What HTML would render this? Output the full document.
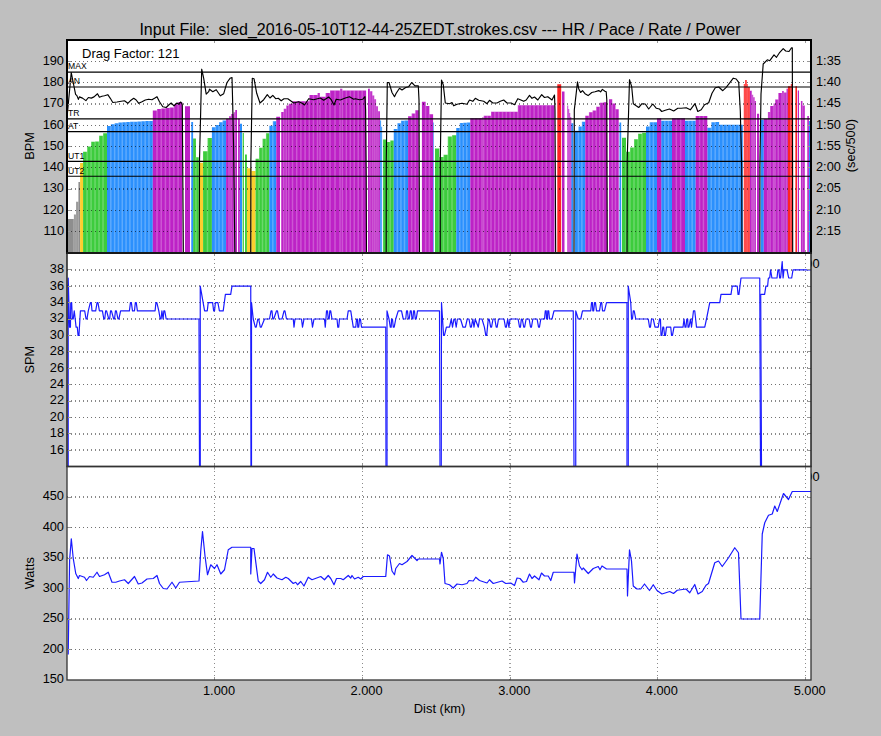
<!DOCTYPE html><html><head><meta charset="utf-8"><style>html,body{margin:0;padding:0;background:#bfbfbf;}svg{display:block;}text{font-family:"Liberation Sans",sans-serif;}</style></head><body><svg width="881" height="736" viewBox="0 0 881 736"><defs><clipPath id="c1"><rect x="67" y="40" width="744" height="213"/></clipPath><clipPath id="c2"><rect x="67" y="253" width="744" height="213.5"/></clipPath><clipPath id="c3"><rect x="67" y="466.5" width="744" height="213.5"/></clipPath><pattern id="st" x="0.6" y="0" width="3.9" height="20" patternUnits="userSpaceOnUse"><rect x="0" y="0" width="1" height="20" fill="#fff" fill-opacity="0.28"/></pattern></defs><rect x="0" y="0" width="881" height="736" fill="#bfbfbf"/><rect x="67" y="40" width="744" height="213" fill="#fff"/><rect x="67" y="253" width="744" height="213.5" fill="#fff"/><rect x="67" y="466.5" width="744" height="213.5" fill="#fff"/><g clip-path="url(#c1)"><path d="M68 253V218.9H73.9V253ZM73.9 253V214.5H76V253ZM76 253V201.75H78.25V253ZM78.25 253V182H80.1V253Z" fill="#8e8e8e"/><path d="M80.1 253V163.1H83.1V253ZM198.75 253V162.66H203.1V253ZM246.9 253V168.26H251.25V253ZM251.25 253V171H255.6V253Z" fill="#fccf2e"/><path d="M83.1 253V151.66H87.08V253ZM87.08 253V146.44H91.07V253ZM91.07 253V141.64H95.05V253ZM95.05 253V141.43H99.03V253ZM99.03 253V135.65H103.02V253ZM103.02 253V133.3H107V253ZM193.1 253V138.55H195.93V253ZM195.93 253V157.14H198.75V253ZM203.1 253V151.3H207.5V253ZM207.5 253V138.04H211.9V253ZM242.6 253V133.1H243.9V253ZM245 253V154.6H246.9V253ZM255.6 253V158.71H259.05V253ZM259.05 253V147.8H262.5V253ZM262.5 253V138.81H265.95V253ZM265.95 253V133.18H269.4V253ZM383.1 253V139.56H386.65V253ZM386.65 253V141.9H390.2V253ZM390.2 253V140.52H393.75V253ZM435 253V148.56H439.25V253ZM439.25 253V156.9H443.5V253ZM443.5 253V154.75H447.75V253ZM447.75 253V136.62H452V253ZM452 253V135.2H456.25V253ZM622 253V137.72H626V253ZM626 253V151.76H630V253ZM630 253V147.4H634V253ZM634 253V139.31H638V253ZM638 253V133.69H642V253ZM642 253V132.76H646V253Z" fill="#3dcc3d"/><path d="M107 253V126.05H110.82V253ZM110.82 253V124.28H114.63V253ZM114.63 253V123.14H118.45V253ZM118.45 253V122.42H122.27V253ZM122.27 253V122.23H126.08V253ZM126.08 253V122.04H129.9V253ZM129.9 253V121.85H133.72V253ZM133.72 253V121.66H137.53V253ZM137.53 253V121.47H141.35V253ZM141.35 253V121.28H145.17V253ZM145.17 253V121.09H148.98V253ZM148.98 253V120.9H152.8V253ZM191.25 253V122H193.1V253ZM211.9 253V127.22H215.45V253ZM215.45 253V125.08H219V253ZM219 253V122.18H222.55V253ZM222.55 253V120.57H226.1V253ZM239.8 253V123.75H242V253ZM269.4 253V125.78H272.82V253ZM272.82 253V121.32H276.25V253ZM379.9 253V120.6H381.1V253ZM381.1 253V126.8H382.1V253ZM393.75 253V128.91H397.34V253ZM397.34 253V123.26H400.92V253ZM400.93 253V120.84H404.51V253ZM404.51 253V120.45H408.1V253ZM433.1 253V122.5H433.75V253ZM456.25 253V128.12H459.76V253ZM459.76 253V123.01H463.27V253ZM463.27 253V122.81H466.79V253ZM466.79 253V122.6H470.3V253ZM571.2 253V123.3H573.3V253ZM575 253V130.8H578.43V253ZM578.43 253V126.52H581.87V253ZM581.87 253V121.72H585.3V253ZM619.5 253V122.5H621.2V253ZM646 253V126.42H649.67V253ZM649.67 253V122.3H653.33V253ZM653.33 253V122.3H657V253ZM661.2 253V120.7H672V253ZM685 253V120.7H695.7V253ZM707.3 253V127.85H711.24V253ZM711.24 253V122.3H715.19V253ZM715.19 253V122.11H719.13V253ZM719.13 253V124.8H723.08V253ZM723.08 253V124.8H727.02V253ZM727.02 253V124.8H730.97V253ZM730.97 253V124.8H734.91V253ZM734.91 253V124.8H738.86V253ZM738.86 253V124.8H742.8V253ZM760.7 253V119.75H763.8V253ZM808.9 253V121H810.5V253Z" fill="#2b90fd"/><path d="M152.8 253V110.45H157.01V253ZM157.01 253V108.96H161.23V253ZM161.23 253V108.48H165.44V253ZM165.44 253V108H169.66V253ZM169.66 253V107.53H173.87V253ZM173.87 253V104.16H178.09V253ZM178.09 253V102.1H182.3V253ZM185 253V106.14H190V253ZM226.1 253V118.75H229V253ZM229 253V116.25H231.1V253ZM231.1 253V114H233.6V253ZM233.6 253V112.2H235.1V253ZM235.1 253V110H237V253ZM238.1 253V118.75H239.8V253ZM276.25 253V116.77H280V253ZM281.25 253V112H283.7V253ZM283.7 253V108.7H286.2V253ZM286.2 253V105.6H288.7V253ZM288.7 253V103.7H292.5V253ZM292.5 253V101.2H309.3V253ZM309.3 253V95H317.5V253ZM317.5 253V93.1H320V253ZM320 253V96.8H325.6V253ZM325.6 253V93.1H330V253ZM330 253V90.6H340V253ZM340 253V88.7H342.4V253ZM342.4 253V90.6H366.1V253ZM368 253V88.7H370V253ZM370 253V91.2H372.4V253ZM372.4 253V95.6H374.3V253ZM374.3 253V99.3H376.1V253ZM376.1 253V106.2H378V253ZM378 253V111.2H379.9V253ZM408.1 253V116.17H411.65V253ZM411.65 253V113.42H415.2V253ZM415.2 253V110.18H418.75V253ZM421.9 253V101.85H425.63V253ZM425.63 253V106.01H429.37V253ZM429.37 253V114.2H433.1V253ZM470.3 253V118.3H482V253ZM482 253V117.5H483.7V253ZM483.7 253V115.8H491V253ZM491 253V111.7H517.8V253ZM517.8 253V105.3H554.5V253ZM562 253V91.5H564.5V253ZM567.25 253V105.6H568.25V253ZM568.25 253V109H569.25V253ZM569.25 253V113H570.25V253ZM570.25 253V117H571.25V253ZM585.3 253V115.69H588.92V253ZM588.92 253V112.29H592.53V253ZM592.53 253V110.48H596.15V253ZM596.15 253V106.84H599.77V253ZM599.77 253V102.67H603.38V253ZM603.38 253V102.14H607V253ZM609 253V99.2H612.23V253ZM612.23 253V103.55H615.47V253ZM615.47 253V109.27H618.7V253ZM657 253V118.2H661.2V253ZM672 253V118.2H685V253ZM695.7 253V116H707.3V253ZM749.75 253V90.7H751.9V253ZM751.9 253V94.75H753.2V253ZM753.2 253V97.25H754.75V253ZM754.75 253V101H756V253ZM757 253V113.8H759.1V253ZM763.8 253V119.1H767.9V253ZM767.9 253V112H770.1V253ZM770.1 253V106H773.5V253ZM773.5 253V103.5H775.1V253ZM775.1 253V99.4H778.25V253ZM778.25 253V92.9H782V253ZM782 253V91H783.9V253ZM783.9 253V92.6H786.4V253ZM786.4 253V88.8H787.9V253ZM797.75 253V90.4H799V253ZM800.9 253V101H802.6V253ZM802.6 253V105.4H804.8V253ZM807.3 253V116H808.9V253Z" fill="#bd22c6"/><path d="M557.3 253V84.2H561.2V253ZM743.8 253V84.1H745V253ZM745 253V80.1H746.9V253ZM746.9 253V84.1H747.9V253ZM747.9 253V86.9H749.75V253ZM787.9 253V86.3H790.75V253ZM790.75 253V84.1H792.6V253ZM795.4 253V86.3H797V253Z" fill="#ff2424"/><path d="M73.15 253V214.5H74.65V253ZM75.25 253V201.75H76.75V253ZM77.5 253V182H79V253ZM86.33 253V146.44H87.83V253ZM90.32 253V141.64H91.82V253ZM94.3 253V141.43H95.8V253ZM98.28 253V135.65H99.78V253ZM102.27 253V133.3H103.77V253ZM110.07 253V124.28H111.57V253ZM113.88 253V123.14H115.38V253ZM117.7 253V122.42H119.2V253ZM121.52 253V122.23H123.02V253ZM125.33 253V122.04H126.83V253ZM129.15 253V121.85H130.65V253ZM132.97 253V121.66H134.47V253ZM136.78 253V121.47H138.28V253ZM140.6 253V121.28H142.1V253ZM144.42 253V121.09H145.92V253ZM148.23 253V120.9H149.73V253ZM156.26 253V108.96H157.76V253ZM160.48 253V108.48H161.98V253ZM164.69 253V108H166.19V253ZM168.91 253V107.53H170.41V253ZM173.12 253V104.16H174.62V253ZM177.34 253V102.1H178.84V253ZM195.18 253V157.14H196.68V253ZM206.75 253V138.04H208.25V253ZM214.7 253V125.08H216.2V253ZM218.25 253V122.18H219.75V253ZM221.8 253V120.57H223.3V253ZM228.25 253V116.25H229.75V253ZM230.35 253V114H231.85V253ZM232.85 253V112.2H234.35V253ZM234.35 253V110H235.85V253ZM250.5 253V171H252V253ZM258.3 253V147.8H259.8V253ZM261.75 253V138.81H263.25V253ZM265.2 253V133.18H266.7V253ZM272.07 253V121.32H273.57V253ZM282.95 253V108.7H284.45V253ZM285.45 253V105.6H286.95V253ZM287.95 253V103.7H289.45V253ZM291.75 253V101.2H293.25V253ZM295.95 253V101.2H297.45V253ZM300.15 253V101.2H301.65V253ZM304.35 253V101.2H305.85V253ZM308.55 253V95H310.05V253ZM312.65 253V95H314.15V253ZM316.75 253V93.1H318.25V253ZM319.25 253V93.1H320.75V253ZM324.85 253V93.1H326.35V253ZM329.25 253V90.6H330.75V253ZM334.25 253V90.6H335.75V253ZM339.25 253V88.7H340.75V253ZM341.65 253V88.7H343.15V253ZM345.6 253V90.6H347.1V253ZM349.55 253V90.6H351.05V253ZM353.5 253V90.6H355V253ZM357.45 253V90.6H358.95V253ZM361.4 253V90.6H362.9V253ZM369.25 253V88.7H370.75V253ZM371.65 253V91.2H373.15V253ZM373.55 253V95.6H375.05V253ZM375.35 253V99.3H376.85V253ZM377.25 253V106.2H378.75V253ZM380.35 253V120.6H381.85V253ZM385.9 253V141.9H387.4V253ZM389.45 253V140.52H390.95V253ZM396.59 253V123.26H398.09V253ZM400.18 253V120.84H401.68V253ZM403.76 253V120.45H405.26V253ZM410.9 253V113.42H412.4V253ZM414.45 253V110.18H415.95V253ZM424.88 253V106.01H426.38V253ZM428.62 253V114.2H430.12V253ZM438.5 253V156.9H440V253ZM442.75 253V154.75H444.25V253ZM447 253V136.62H448.5V253ZM451.25 253V135.2H452.75V253ZM459.01 253V123.01H460.51V253ZM462.52 253V122.81H464.02V253ZM466.04 253V122.6H467.54V253ZM473.45 253V118.3H474.95V253ZM477.35 253V118.3H478.85V253ZM481.25 253V117.5H482.75V253ZM482.95 253V115.8H484.45V253ZM486.6 253V115.8H488.1V253ZM490.25 253V111.7H491.75V253ZM494.08 253V111.7H495.58V253ZM497.91 253V111.7H499.41V253ZM501.74 253V111.7H503.24V253ZM505.56 253V111.7H507.06V253ZM509.39 253V111.7H510.89V253ZM513.22 253V111.7H514.72V253ZM517.05 253V105.3H518.55V253ZM521.13 253V105.3H522.63V253ZM525.21 253V105.3H526.71V253ZM529.28 253V105.3H530.78V253ZM533.36 253V105.3H534.86V253ZM537.44 253V105.3H538.94V253ZM541.52 253V105.3H543.02V253ZM545.59 253V105.3H547.09V253ZM549.67 253V105.3H551.17V253ZM567.5 253V105.6H569V253ZM568.5 253V109H570V253ZM569.5 253V113H571V253ZM577.68 253V126.52H579.18V253ZM581.12 253V121.72H582.62V253ZM588.17 253V112.29H589.67V253ZM591.78 253V110.48H593.28V253ZM595.4 253V106.84H596.9V253ZM599.02 253V102.67H600.52V253ZM602.63 253V102.14H604.13V253ZM611.48 253V103.55H612.98V253ZM614.72 253V109.27H616.22V253ZM625.25 253V151.76H626.75V253ZM629.25 253V147.4H630.75V253ZM633.25 253V139.31H634.75V253ZM637.25 253V133.69H638.75V253ZM641.25 253V132.76H642.75V253ZM648.92 253V122.3H650.42V253ZM652.58 253V122.3H654.08V253ZM664.05 253V120.7H665.55V253ZM667.65 253V120.7H669.15V253ZM675.58 253V118.2H677.08V253ZM679.92 253V118.2H681.42V253ZM687.82 253V120.7H689.32V253ZM691.38 253V120.7H692.88V253ZM698.82 253V116H700.32V253ZM702.68 253V116H704.18V253ZM710.49 253V122.3H711.99V253ZM714.44 253V122.11H715.94V253ZM718.38 253V124.8H719.88V253ZM722.33 253V124.8H723.83V253ZM726.27 253V124.8H727.77V253ZM730.22 253V124.8H731.72V253ZM734.16 253V124.8H735.66V253ZM738.11 253V124.8H739.61V253ZM744.25 253V80.1H745.75V253ZM746.15 253V80.1H747.65V253ZM747.15 253V84.1H748.65V253ZM751.15 253V90.7H752.65V253ZM752.45 253V94.75H753.95V253ZM754 253V97.25H755.5V253ZM767.15 253V112H768.65V253ZM769.35 253V106H770.85V253ZM772.75 253V103.5H774.25V253ZM774.35 253V99.4H775.85V253ZM777.5 253V92.9H779V253ZM781.25 253V91H782.75V253ZM783.15 253V91H784.65V253ZM785.65 253V88.8H787.15V253ZM790 253V84.1H791.5V253ZM801.85 253V101H803.35V253Z" fill="#fff" fill-opacity="0.24"/><line x1="67" y1="231.5" x2="811" y2="231.5" style="stroke:#000;stroke-opacity:0.56" stroke-width="1" stroke-dasharray="1 3"/><line x1="67" y1="210.5" x2="811" y2="210.5" style="stroke:#000;stroke-opacity:0.56" stroke-width="1" stroke-dasharray="1 3"/><line x1="67" y1="189" x2="811" y2="189" style="stroke:#000;stroke-opacity:0.93" stroke-width="1" stroke-dasharray="1 3"/><line x1="67" y1="167.5" x2="811" y2="167.5" style="stroke:#000;stroke-opacity:0.56" stroke-width="1" stroke-dasharray="1 3"/><line x1="67" y1="146.5" x2="811" y2="146.5" style="stroke:#000;stroke-opacity:0.56" stroke-width="1" stroke-dasharray="1 3"/><line x1="67" y1="125.5" x2="811" y2="125.5" style="stroke:#000;stroke-opacity:0.56" stroke-width="1" stroke-dasharray="1 3"/><line x1="67" y1="104" x2="811" y2="104" style="stroke:#000;stroke-opacity:0.93" stroke-width="1" stroke-dasharray="1 3"/><line x1="67" y1="82.5" x2="811" y2="82.5" style="stroke:#000;stroke-opacity:0.56" stroke-width="1" stroke-dasharray="1 3"/><line x1="67" y1="61.5" x2="811" y2="61.5" style="stroke:#000;stroke-opacity:0.56" stroke-width="1" stroke-dasharray="1 3"/><line x1="67" y1="72.12" x2="811" y2="72.12" stroke="#000" stroke-width="1.15"/><line x1="67" y1="87" x2="811" y2="87" stroke="#000" stroke-width="1.15"/><line x1="67" y1="118.88" x2="811" y2="118.88" stroke="#000" stroke-width="1.15"/><line x1="67" y1="131.62" x2="811" y2="131.62" stroke="#000" stroke-width="1.15"/><line x1="67" y1="161.38" x2="811" y2="161.38" stroke="#000" stroke-width="1.15"/><line x1="67" y1="176.25" x2="811" y2="176.25" stroke="#000" stroke-width="1.15"/><text x="68" y="69.42" font-size="8.6" fill="#000">MAX</text><text x="68" y="84.3" font-size="8.6" fill="#000">AN</text><text x="68" y="116.17" font-size="8.6" fill="#000">TR</text><text x="68" y="128.93" font-size="8.6" fill="#000">AT</text><text x="68" y="158.68" font-size="8.6" fill="#000">UT1</text><text x="68" y="173.55" font-size="8.6" fill="#000">UT2</text><polyline points="66.5,123 71.25,72.5 73.5,84 75.6,94.4 76.9,95.6 78.4,99.4 79.4,96.9 82.5,98.1 85.9,100.6 88.4,97.5 91.25,98.1 94,96.9 97.5,93.75 99.4,97.2 101.9,96.25 104.5,95.8 107.8,94.7 110.3,98.3 112.8,102.5 117,102 121.2,101.3 124.5,100.8 127.8,103.3 130.3,100.8 133.7,98.3 136.2,100 138.7,103.3 142,101.7 145.3,100 148.7,99.2 152,99.7 154.5,98.3 157,96.7 159.5,101.7 162.8,106.7 166.2,107.5 168.7,105 171.2,103 174,105.8 177,103 178.7,104.2 180.7,102 181.7,103.3 182.3,105 183.4,262" fill="none" stroke="#000" stroke-width="1.15" stroke-linejoin="round"/><polyline points="199.3,262 199.5,160 201.7,69.2 203.7,78.3 206.2,94.2 208.7,91.7 209.5,89.2 212.8,91.7 216.2,89.7 220.3,95.8 223.7,93.7 227,82.5 230,78.3 232,77.5 232.6,100 233.6,146 234.5,222 235,262" fill="none" stroke="#000" stroke-width="1.15" stroke-linejoin="round"/><polyline points="250.75,262 250.9,160 252.3,78.3 254,78.7 256.7,93.3 260,103 263.7,99.7 267.3,94.7 270,98 272.8,95.3 275.7,98.7 278.3,98.3 281.2,100.8 284,98.7 287.8,98.7 293.7,103 298.7,101.7 301.7,103 304.5,105 308.7,98.7 313.7,99.7 320.3,98 323.7,100.3 328.7,97 331.2,99.7 334,105 336.2,99.2 340.3,100 345.3,98 349.5,96.7 353.7,99.2 355.3,98.7 359.5,99.7 362.8,99.2 365,96.7 365.6,110 366.2,173 366.5,262" fill="none" stroke="#000" stroke-width="1.15" stroke-linejoin="round"/><polyline points="386.2,262 386.3,160 387.3,82.5 389,82.5 392,92.5 394.5,96.7 396.2,93.3 399.5,88.3 402,90 405.7,87.5 408.7,86.7 411.7,82.5 415,85.8 418.3,85.8 419,100 419.5,262" fill="none" stroke="#000" stroke-width="1.15" stroke-linejoin="round"/><polyline points="440.2,262 440.3,160 441.5,80 443.3,85 445.3,103 449.5,103.7 452,102.5 453.7,105.8 457,104.2 462,103.3 467,104.2 469.5,100 472.8,101.3 475.3,98.3 478.7,100.3 483.7,101.3 487,103.7 489.5,100.3 492.8,103 497,103 500.3,101.3 503.7,100 507,103 511.2,103 514.5,104.7 517.8,98.7 520.3,99.7 523.7,101.3 526.2,100 529.5,95.3 532,98.3 534.5,97 537.8,100 541.7,94.7 544.5,97.5 547.8,96.7 552,100 554.5,95 555,110 555.7,262" fill="none" stroke="#000" stroke-width="1.15" stroke-linejoin="round"/><polyline points="574,262 574.3,110 577.5,81.9 578.7,88.7 580.6,92.5 582.5,90.6 585,93.7 588.1,95.6 591.8,92.5 595,91.8 598.7,90.6 600.6,91.8 602.4,89.4 604.9,91.2 606.2,91.8 606.8,100 607.3,262" fill="none" stroke="#000" stroke-width="1.15" stroke-linejoin="round"/><polyline points="627,262 627.2,160 629.5,79.7 631.7,86.7 633.3,103.7 636.2,105.8 638.7,107.5 642,103.7 645.3,104 648.7,109 652.8,104 656.2,108.2 659.5,109 661.7,111.5 665.3,110.3 669.5,109 673.7,111 677.8,108.2 681.2,108.2 686.2,107.7 690.3,109.8 695,103.7 697.8,111.5 701.2,109.8 704.5,104.8 708.7,102.7 712,93.2 715.3,87.7 718.7,87 722.8,90.7 726.2,87.3 729.5,83.2 733.3,78.2 736.2,79 738.7,82.3 740.3,110.7 741.7,166.7 742,262" fill="none" stroke="#000" stroke-width="1.15" stroke-linejoin="round"/><polyline points="759.8,262 759.9,166.7 761,94 763.2,64 767.3,59.8 769.8,60.7 774,54.8 776.5,57.3 779.8,52.3 783.2,48.7 785.7,51 789,51.5 791.5,47.7 792.3,47.7 792.5,120 792.7,262" fill="none" stroke="#000" stroke-width="1.15" stroke-linejoin="round"/></g><text x="82" y="57.5" font-size="13" fill="#000">Drag Factor: 121</text><g clip-path="url(#c2)"><line x1="67" y1="450" x2="811" y2="450" style="stroke:#000;stroke-opacity:0.93" stroke-width="1" stroke-dasharray="1 3"/><line x1="67" y1="434" x2="811" y2="434" style="stroke:#000;stroke-opacity:0.93" stroke-width="1" stroke-dasharray="1 3"/><line x1="67" y1="417.5" x2="811" y2="417.5" style="stroke:#000;stroke-opacity:0.56" stroke-width="1" stroke-dasharray="1 3"/><line x1="67" y1="401" x2="811" y2="401" style="stroke:#000;stroke-opacity:0.93" stroke-width="1" stroke-dasharray="1 3"/><line x1="67" y1="384.5" x2="811" y2="384.5" style="stroke:#000;stroke-opacity:0.56" stroke-width="1" stroke-dasharray="1 3"/><line x1="67" y1="368" x2="811" y2="368" style="stroke:#000;stroke-opacity:0.93" stroke-width="1" stroke-dasharray="1 3"/><line x1="67" y1="352" x2="811" y2="352" style="stroke:#000;stroke-opacity:0.93" stroke-width="1" stroke-dasharray="1 3"/><line x1="67" y1="335.5" x2="811" y2="335.5" style="stroke:#000;stroke-opacity:0.56" stroke-width="1" stroke-dasharray="1 3"/><line x1="67" y1="319" x2="811" y2="319" style="stroke:#000;stroke-opacity:0.93" stroke-width="1" stroke-dasharray="1 3"/><line x1="67" y1="302.5" x2="811" y2="302.5" style="stroke:#000;stroke-opacity:0.56" stroke-width="1" stroke-dasharray="1 3"/><line x1="67" y1="286" x2="811" y2="286" style="stroke:#000;stroke-opacity:0.93" stroke-width="1" stroke-dasharray="1 3"/><line x1="67" y1="270" x2="811" y2="270" style="stroke:#000;stroke-opacity:0.93" stroke-width="1" stroke-dasharray="1 3"/><line x1="214.5" y1="255" x2="214.5" y2="466.5" style="stroke:#000;stroke-opacity:0.46" stroke-width="1" stroke-dasharray="1 3"/><line x1="362.5" y1="255" x2="362.5" y2="466.5" style="stroke:#000;stroke-opacity:0.46" stroke-width="1" stroke-dasharray="1 3"/><line x1="510" y1="255" x2="510" y2="466.5" style="stroke:#000;stroke-opacity:0.75" stroke-width="1" stroke-dasharray="1 3"/><line x1="657.5" y1="255" x2="657.5" y2="466.5" style="stroke:#000;stroke-opacity:0.46" stroke-width="1" stroke-dasharray="1 3"/><line x1="805.5" y1="255" x2="805.5" y2="466.5" style="stroke:#000;stroke-opacity:0.46" stroke-width="1" stroke-dasharray="1 3"/><polyline points="68.2,466.6 68.2,278 69.55,327.2 70.45,327.2 70.75,302.6 71.65,302.6 72.35,319 73.25,319 74.25,310.8 75.2,319 76.1,327.2 77.3,327.2 78.05,335.4 78.95,335.4 80.4,310.8 84.7,310.8 86.05,319 86.95,319 88.3,310.8 90.35,302.6 91.25,302.6 92,310.8 95.7,310.8 97.05,302.6 97.95,302.6 99.4,310.8 102.4,310.8 103.85,319 104.75,319 105.65,310.8 106.55,310.8 108.75,319 109.65,319 110.55,310.8 111.45,310.8 113.65,319 114.55,319 115.45,310.8 116.35,310.8 117.95,319 118.85,319 120.6,310.8 129.4,310.8 130.45,302.6 131.35,302.6 132.5,310.8 134.5,310.8 135.35,302.6 136.25,302.6 137.4,310.8 155.1,310.8 155.95,302.6 156.85,302.6 158.8,310.8 160.2,319 161.1,319 161.9,310.8 163.1,319 163.85,310.8 164.75,310.8 166.2,319 199,319 199.5,466.6" fill="none" stroke="#1a1aff" stroke-width="1.2" stroke-linejoin="round"/><polyline points="200.25,466.6 200.25,286.2 204.6,310.8 207.3,310.8 208.2,302.6 212.6,302.6 213.65,310.8 214.55,310.8 215.4,302.6 217.9,302.6 219.4,310.8 223.2,310.8 225.4,294.4 230.7,294.4 232,286.2 250.75,286.2 251,466.6" fill="none" stroke="#1a1aff" stroke-width="1.2" stroke-linejoin="round"/><polyline points="251.5,466.6 251.5,302.6 253.25,319 255.3,327.2 256.2,327.2 257.8,319 258.7,319 260.3,327.2 261.2,327.2 264.5,319 269.5,319 271.05,310.8 271.95,310.8 272.8,319 273.7,319 276.55,310.8 277.45,310.8 279,319 282,319 284.05,310.8 284.95,310.8 286.5,319 293.25,319 294,327.2 295,319 301.5,319 302.5,327.2 304,319 311.5,319 312.5,327.2 314,319 324.5,319 325.25,327.2 326.55,310.8 327.45,310.8 328.3,319 329.2,319 329.8,310.8 330.7,310.8 332,319 337,319 337.8,327.2 338.7,327.2 339.5,319 347,319 348.25,310.8 350.75,310.8 353.25,327.2 355.75,327.2 356.55,319 357.45,319 357.8,327.2 358.7,327.2 359.55,319 360.45,319 361.5,327.2 385.75,327.2 386,466.6" fill="none" stroke="#1a1aff" stroke-width="1.2" stroke-linejoin="round"/><polyline points="387,466.6 387,310.8 389,319 390.3,327.2 391.2,327.2 391.55,319 392.45,319 393.3,327.2 394.2,327.2 395.75,319 398.25,310.8 401.5,310.8 403.25,319 405.75,319 406.55,310.8 407.45,310.8 408.3,319 409.2,319 410.3,310.8 411.2,310.8 412.05,319 412.95,319 413.55,310.8 414.45,310.8 415.3,319 416.2,319 417.5,310.8 439.5,310.8 440,466.6" fill="none" stroke="#1a1aff" stroke-width="1.2" stroke-linejoin="round"/><polyline points="441.25,466.6 441.5,302.6 443.55,335.4 444.45,335.4 446.4,327.2 449.5,327.2 451.3,319 452.5,327.2 453.95,319 454.85,319 456.2,327.2 457.4,319 460.5,319 463,327.2 465.4,327.2 467.25,319 469,319 470.45,327.2 471.35,327.2 472.8,319 474,327.2 475.2,319 478.3,327.2 479.5,319 482,319 484.4,327.2 485.8,335.4 486.7,335.4 488.25,319 489.15,319 490.65,327.2 491.55,327.2 493,319 494.8,319 496.25,327.2 497.15,327.2 498.5,319 504,319 505.45,327.2 506.35,327.2 507.7,319 508.9,327.2 510.1,319 518.1,319 519.55,327.2 520.45,327.2 521.35,319 522.25,319 523.75,327.2 524.65,327.2 526.1,319 529.1,319 530.55,327.2 531.45,327.2 532.8,319 537.1,319 538.55,327.2 539.45,327.2 540.8,319 544.5,319 545.3,310.8 546.2,310.8 546.55,319 547.45,319 547.8,310.8 548.7,310.8 549.5,319 552,319 554,310.8 573.25,310.8 574,466.6" fill="none" stroke="#1a1aff" stroke-width="1.2" stroke-linejoin="round"/><polyline points="575.75,466.6 575.75,310.8 578.25,319 580.75,319 582.5,310.8 590.75,310.8 591.55,302.6 592.45,302.6 592.8,310.8 593.7,310.8 594.55,302.6 595.45,302.6 596.5,310.8 599.5,310.8 600.8,302.6 601.7,302.6 602.5,310.8 604.5,310.8 606.5,302.6 627,302.6 627,466.6" fill="none" stroke="#1a1aff" stroke-width="1.2" stroke-linejoin="round"/><polyline points="628.25,466.6 628.25,286.2 630.75,302.6 631.55,319 632.45,319 633.3,310.8 634.2,310.8 635.75,319 648.25,319 649.55,327.2 650.45,327.2 651.5,319 653.25,319 655,327.2 658.25,327.2 659.55,319 660.45,319 661.05,335.4 661.95,335.4 662.8,327.2 663.7,327.2 664.55,335.4 665.45,335.4 666.5,327.2 670.75,327.2 671.55,335.4 672.45,335.4 674,327.2 683,327.2 684,319 685.05,327.2 685.95,327.2 686.8,319 687.7,319 688.05,327.2 688.95,327.2 690.5,319 691.5,327.2 693.5,310.8 694.75,310.8 696.5,327.2 704.75,327.2 706.5,319 709.75,302.6 719.75,302.6 721,294.4 731,294.4 732.25,286.2 737.25,286.2 738.05,294.4 738.95,294.4 741,278 759.75,278 760.5,466.6" fill="none" stroke="#1a1aff" stroke-width="1.2" stroke-linejoin="round"/><polyline points="761.5,466.6 760.7,294.4 764.6,294.4 765.9,286.2 767.6,286.2 768.4,278 769.7,278 770.6,269.8 771.9,278 777,278 777.95,269.8 778.85,269.8 779.65,278 780.55,278 782.2,261.6 783.1,278 784,269.8 787,269.8 788.7,278 791.7,278 793,269.8 811,269.8" fill="none" stroke="#1a1aff" stroke-width="1.2" stroke-linejoin="round"/></g><g clip-path="url(#c3)"><line x1="67" y1="649.5" x2="811" y2="649.5" style="stroke:#000;stroke-opacity:0.56" stroke-width="1" stroke-dasharray="1 3"/><line x1="67" y1="619" x2="811" y2="619" style="stroke:#000;stroke-opacity:0.93" stroke-width="1" stroke-dasharray="1 3"/><line x1="67" y1="588.5" x2="811" y2="588.5" style="stroke:#000;stroke-opacity:0.56" stroke-width="1" stroke-dasharray="1 3"/><line x1="67" y1="558" x2="811" y2="558" style="stroke:#000;stroke-opacity:0.93" stroke-width="1" stroke-dasharray="1 3"/><line x1="67" y1="527.5" x2="811" y2="527.5" style="stroke:#000;stroke-opacity:0.56" stroke-width="1" stroke-dasharray="1 3"/><line x1="67" y1="497" x2="811" y2="497" style="stroke:#000;stroke-opacity:0.93" stroke-width="1" stroke-dasharray="1 3"/><line x1="214.5" y1="467" x2="214.5" y2="680" style="stroke:#000;stroke-opacity:0.46" stroke-width="1" stroke-dasharray="1 3"/><line x1="362.5" y1="467" x2="362.5" y2="680" style="stroke:#000;stroke-opacity:0.46" stroke-width="1" stroke-dasharray="1 3"/><line x1="510" y1="467" x2="510" y2="680" style="stroke:#000;stroke-opacity:0.75" stroke-width="1" stroke-dasharray="1 3"/><line x1="657.5" y1="467" x2="657.5" y2="680" style="stroke:#000;stroke-opacity:0.46" stroke-width="1" stroke-dasharray="1 3"/><line x1="805.5" y1="467" x2="805.5" y2="680" style="stroke:#000;stroke-opacity:0.46" stroke-width="1" stroke-dasharray="1 3"/><polyline points="68.2,654.5 69.6,560 71.3,538.75 73.25,558.5 75.75,573.5 78.25,578.5 79.5,575.5 84.5,577.25 86.5,580.5 89.5,576.5 93.25,577.25 97,572.25 99.5,576.5 104.5,574.75 108.25,572.25 112,582.25 115.75,582.25 119.5,581 124.5,579.75 128.25,583.5 134.5,576.5 138.25,584 142,583 147,579 153.25,578.5 157,575.5 159.5,583.5 163.25,588.5 167,589 172,582.25 175.75,588 179.5,582.25 199,581 200.75,551 202.5,531.5 205,556 207.5,574.75 210.75,564.75 214.5,568.5 217,564.75 220.75,574 224.5,569.75 228.25,549.75 232,547.25 250.75,547.25 250.75,574 252,548.5 254,548.5 258.25,581 260.75,583.5 264.5,579.75 267.5,572.25 270.75,577.25 273.25,574 277,578 282,579.75 285.75,577.25 288.25,578.5 293.25,583.5 295.75,582.25 297.5,584.75 300.75,581.5 304,586 308.25,577.25 312,579.75 320.75,576.5 324.5,579.75 328.25,575.5 330.75,578.5 334,584.75 336.5,578.5 340.75,578.5 343.25,579.75 348.25,575.5 350.75,578 352,575.5 354.5,579 358.25,577.25 360.75,579 363.25,576.5 385.75,576.5 387.5,554.75 389.5,556 392,571 394.5,574.75 395.75,568.5 399.5,563.5 402,564.75 407,561.5 412,555.5 417,560.5 418.25,559 439.5,559 440,564 441.5,552.25 443.25,558.5 445,583.5 449.5,584.75 453.25,588 457,584 462,584.75 467,583.5 469,580.5 473.25,581 475.75,577.25 479.5,580.5 487,583 489.5,579.75 493.25,583.5 502,581 505.75,583.5 510.75,583 514.5,585.5 517,578 520,578.5 523.25,582.25 526.5,581.5 529.5,574 532,578.5 534.5,576 539,579.75 541.5,573 544.5,576 548.25,576 550.75,580.5 553.25,572.25 574,572.25 574.5,583 577,554 579.5,566 582,569.75 583.25,568 588.25,573.5 593.25,568.5 598.25,566.5 600,569.75 602,566 606.5,569 627,569 627.5,596 629.5,549.75 631.5,561 633.25,586 637,589 640.75,589 644.5,584 649.5,590.5 653.25,584.75 657,590.5 662,594 669.75,591.5 673.5,593.5 677.25,590.25 686,589 689.75,592.75 694.75,584.5 698,594 702.25,591.5 706,585.25 708.5,583.5 714.75,562.75 718.5,561 722.25,566.5 728.5,557.75 734.75,547.75 738.5,552.75 741,619 759.75,619 762.25,534 764.75,522.75 768.5,515.25 772.25,514 774.75,506 777.25,511.5 783.5,493.5 788.5,499.5 792.25,491.5 811,491.5" fill="none" stroke="#1a1aff" stroke-width="1.2" stroke-linejoin="round"/></g><line x1="67" y1="231.5" x2="71" y2="231.5" stroke="#999" stroke-width="1"/><line x1="807" y1="231.5" x2="811" y2="231.5" stroke="#999" stroke-width="1"/><line x1="67" y1="210.5" x2="71" y2="210.5" stroke="#999" stroke-width="1"/><line x1="807" y1="210.5" x2="811" y2="210.5" stroke="#999" stroke-width="1"/><line x1="67" y1="189.5" x2="71" y2="189.5" stroke="#999" stroke-width="1"/><line x1="807" y1="189.5" x2="811" y2="189.5" stroke="#999" stroke-width="1"/><line x1="67" y1="167.5" x2="71" y2="167.5" stroke="#999" stroke-width="1"/><line x1="807" y1="167.5" x2="811" y2="167.5" stroke="#999" stroke-width="1"/><line x1="67" y1="146.5" x2="71" y2="146.5" stroke="#999" stroke-width="1"/><line x1="807" y1="146.5" x2="811" y2="146.5" stroke="#999" stroke-width="1"/><line x1="67" y1="125.5" x2="71" y2="125.5" stroke="#999" stroke-width="1"/><line x1="807" y1="125.5" x2="811" y2="125.5" stroke="#999" stroke-width="1"/><line x1="67" y1="104.5" x2="71" y2="104.5" stroke="#999" stroke-width="1"/><line x1="807" y1="104.5" x2="811" y2="104.5" stroke="#999" stroke-width="1"/><line x1="67" y1="82.5" x2="71" y2="82.5" stroke="#999" stroke-width="1"/><line x1="807" y1="82.5" x2="811" y2="82.5" stroke="#999" stroke-width="1"/><line x1="67" y1="61.5" x2="71" y2="61.5" stroke="#999" stroke-width="1"/><line x1="807" y1="61.5" x2="811" y2="61.5" stroke="#999" stroke-width="1"/><line x1="67" y1="450.5" x2="71" y2="450.5" stroke="#999" stroke-width="1"/><line x1="807" y1="450.5" x2="811" y2="450.5" stroke="#999" stroke-width="1"/><line x1="67" y1="433.5" x2="71" y2="433.5" stroke="#999" stroke-width="1"/><line x1="807" y1="433.5" x2="811" y2="433.5" stroke="#999" stroke-width="1"/><line x1="67" y1="417.5" x2="71" y2="417.5" stroke="#999" stroke-width="1"/><line x1="807" y1="417.5" x2="811" y2="417.5" stroke="#999" stroke-width="1"/><line x1="67" y1="401.5" x2="71" y2="401.5" stroke="#999" stroke-width="1"/><line x1="807" y1="401.5" x2="811" y2="401.5" stroke="#999" stroke-width="1"/><line x1="67" y1="384.5" x2="71" y2="384.5" stroke="#999" stroke-width="1"/><line x1="807" y1="384.5" x2="811" y2="384.5" stroke="#999" stroke-width="1"/><line x1="67" y1="368.5" x2="71" y2="368.5" stroke="#999" stroke-width="1"/><line x1="807" y1="368.5" x2="811" y2="368.5" stroke="#999" stroke-width="1"/><line x1="67" y1="351.5" x2="71" y2="351.5" stroke="#999" stroke-width="1"/><line x1="807" y1="351.5" x2="811" y2="351.5" stroke="#999" stroke-width="1"/><line x1="67" y1="335.5" x2="71" y2="335.5" stroke="#999" stroke-width="1"/><line x1="807" y1="335.5" x2="811" y2="335.5" stroke="#999" stroke-width="1"/><line x1="67" y1="319.5" x2="71" y2="319.5" stroke="#999" stroke-width="1"/><line x1="807" y1="319.5" x2="811" y2="319.5" stroke="#999" stroke-width="1"/><line x1="67" y1="302.5" x2="71" y2="302.5" stroke="#999" stroke-width="1"/><line x1="807" y1="302.5" x2="811" y2="302.5" stroke="#999" stroke-width="1"/><line x1="67" y1="286.5" x2="71" y2="286.5" stroke="#999" stroke-width="1"/><line x1="807" y1="286.5" x2="811" y2="286.5" stroke="#999" stroke-width="1"/><line x1="67" y1="269.5" x2="71" y2="269.5" stroke="#999" stroke-width="1"/><line x1="807" y1="269.5" x2="811" y2="269.5" stroke="#999" stroke-width="1"/><line x1="67" y1="649.5" x2="71" y2="649.5" stroke="#999" stroke-width="1"/><line x1="807" y1="649.5" x2="811" y2="649.5" stroke="#999" stroke-width="1"/><line x1="67" y1="619.5" x2="71" y2="619.5" stroke="#999" stroke-width="1"/><line x1="807" y1="619.5" x2="811" y2="619.5" stroke="#999" stroke-width="1"/><line x1="67" y1="588.5" x2="71" y2="588.5" stroke="#999" stroke-width="1"/><line x1="807" y1="588.5" x2="811" y2="588.5" stroke="#999" stroke-width="1"/><line x1="67" y1="558.5" x2="71" y2="558.5" stroke="#999" stroke-width="1"/><line x1="807" y1="558.5" x2="811" y2="558.5" stroke="#999" stroke-width="1"/><line x1="67" y1="527.5" x2="71" y2="527.5" stroke="#999" stroke-width="1"/><line x1="807" y1="527.5" x2="811" y2="527.5" stroke="#999" stroke-width="1"/><line x1="67" y1="497.5" x2="71" y2="497.5" stroke="#999" stroke-width="1"/><line x1="807" y1="497.5" x2="811" y2="497.5" stroke="#999" stroke-width="1"/><line x1="214.5" y1="40" x2="214.5" y2="43" stroke="#999" stroke-width="1"/><line x1="214.5" y1="250" x2="214.5" y2="253" stroke="#999" stroke-width="1"/><line x1="214.5" y1="253" x2="214.5" y2="256" stroke="#999" stroke-width="1"/><line x1="214.5" y1="463.5" x2="214.5" y2="466.5" stroke="#999" stroke-width="1"/><line x1="214.5" y1="466.5" x2="214.5" y2="469.5" stroke="#999" stroke-width="1"/><line x1="214.5" y1="677" x2="214.5" y2="680" stroke="#999" stroke-width="1"/><line x1="362.5" y1="40" x2="362.5" y2="43" stroke="#999" stroke-width="1"/><line x1="362.5" y1="250" x2="362.5" y2="253" stroke="#999" stroke-width="1"/><line x1="362.5" y1="253" x2="362.5" y2="256" stroke="#999" stroke-width="1"/><line x1="362.5" y1="463.5" x2="362.5" y2="466.5" stroke="#999" stroke-width="1"/><line x1="362.5" y1="466.5" x2="362.5" y2="469.5" stroke="#999" stroke-width="1"/><line x1="362.5" y1="677" x2="362.5" y2="680" stroke="#999" stroke-width="1"/><line x1="510.5" y1="40" x2="510.5" y2="43" stroke="#999" stroke-width="1"/><line x1="510.5" y1="250" x2="510.5" y2="253" stroke="#999" stroke-width="1"/><line x1="510.5" y1="253" x2="510.5" y2="256" stroke="#999" stroke-width="1"/><line x1="510.5" y1="463.5" x2="510.5" y2="466.5" stroke="#999" stroke-width="1"/><line x1="510.5" y1="466.5" x2="510.5" y2="469.5" stroke="#999" stroke-width="1"/><line x1="510.5" y1="677" x2="510.5" y2="680" stroke="#999" stroke-width="1"/><line x1="657.5" y1="40" x2="657.5" y2="43" stroke="#999" stroke-width="1"/><line x1="657.5" y1="250" x2="657.5" y2="253" stroke="#999" stroke-width="1"/><line x1="657.5" y1="253" x2="657.5" y2="256" stroke="#999" stroke-width="1"/><line x1="657.5" y1="463.5" x2="657.5" y2="466.5" stroke="#999" stroke-width="1"/><line x1="657.5" y1="466.5" x2="657.5" y2="469.5" stroke="#999" stroke-width="1"/><line x1="657.5" y1="677" x2="657.5" y2="680" stroke="#999" stroke-width="1"/><line x1="805.5" y1="40" x2="805.5" y2="43" stroke="#999" stroke-width="1"/><line x1="805.5" y1="250" x2="805.5" y2="253" stroke="#999" stroke-width="1"/><line x1="805.5" y1="253" x2="805.5" y2="256" stroke="#999" stroke-width="1"/><line x1="805.5" y1="463.5" x2="805.5" y2="466.5" stroke="#999" stroke-width="1"/><line x1="805.5" y1="466.5" x2="805.5" y2="469.5" stroke="#999" stroke-width="1"/><line x1="805.5" y1="677" x2="805.5" y2="680" stroke="#999" stroke-width="1"/><rect x="67" y="40" width="744" height="213" fill="none" stroke="#000" stroke-width="2"/><rect x="67" y="253" width="744" height="213.5" fill="none" stroke="#222" stroke-width="1.5"/><rect x="67" y="466.5" width="744" height="213.5" fill="none" stroke="#333" stroke-width="1.3"/><text x="64" y="234.9" font-size="12.8" text-anchor="end" fill="#000">110</text><text x="64" y="213.65" font-size="12.8" text-anchor="end" fill="#000">120</text><text x="64" y="192.4" font-size="12.8" text-anchor="end" fill="#000">130</text><text x="64" y="171.15" font-size="12.8" text-anchor="end" fill="#000">140</text><text x="64" y="149.9" font-size="12.8" text-anchor="end" fill="#000">150</text><text x="64" y="128.65" font-size="12.8" text-anchor="end" fill="#000">160</text><text x="64" y="107.4" font-size="12.8" text-anchor="end" fill="#000">170</text><text x="64" y="86.15" font-size="12.8" text-anchor="end" fill="#000">180</text><text x="64" y="64.9" font-size="12.8" text-anchor="end" fill="#000">190</text><text x="64" y="453.6" font-size="12.8" text-anchor="end" fill="#000">16</text><text x="64" y="437.2" font-size="12.8" text-anchor="end" fill="#000">18</text><text x="64" y="420.8" font-size="12.8" text-anchor="end" fill="#000">20</text><text x="64" y="404.4" font-size="12.8" text-anchor="end" fill="#000">22</text><text x="64" y="388" font-size="12.8" text-anchor="end" fill="#000">24</text><text x="64" y="371.6" font-size="12.8" text-anchor="end" fill="#000">26</text><text x="64" y="355.2" font-size="12.8" text-anchor="end" fill="#000">28</text><text x="64" y="338.8" font-size="12.8" text-anchor="end" fill="#000">30</text><text x="64" y="322.4" font-size="12.8" text-anchor="end" fill="#000">32</text><text x="64" y="306" font-size="12.8" text-anchor="end" fill="#000">34</text><text x="64" y="289.6" font-size="12.8" text-anchor="end" fill="#000">36</text><text x="64" y="273.2" font-size="12.8" text-anchor="end" fill="#000">38</text><text x="64" y="683.4" font-size="12.8" text-anchor="end" fill="#000">150</text><text x="64" y="652.9" font-size="12.8" text-anchor="end" fill="#000">200</text><text x="64" y="622.4" font-size="12.8" text-anchor="end" fill="#000">250</text><text x="64" y="591.9" font-size="12.8" text-anchor="end" fill="#000">300</text><text x="64" y="561.4" font-size="12.8" text-anchor="end" fill="#000">350</text><text x="64" y="530.9" font-size="12.8" text-anchor="end" fill="#000">400</text><text x="64" y="500.4" font-size="12.8" text-anchor="end" fill="#000">450</text><text x="816" y="64.9" font-size="12.8" fill="#000">1:35</text><text x="816" y="86.15" font-size="12.8" fill="#000">1:40</text><text x="816" y="107.4" font-size="12.8" fill="#000">1:45</text><text x="816" y="128.65" font-size="12.8" fill="#000">1:50</text><text x="816" y="149.9" font-size="12.8" fill="#000">1:55</text><text x="816" y="171.15" font-size="12.8" fill="#000">2:00</text><text x="816" y="192.4" font-size="12.8" fill="#000">2:05</text><text x="816" y="213.65" font-size="12.8" fill="#000">2:10</text><text x="816" y="234.9" font-size="12.8" fill="#000">2:15</text><clipPath id="cz"><rect x="811.2" y="240" width="70" height="300"/></clipPath><g clip-path="url(#cz)"><text x="805.3" y="267.6" font-size="12.8" fill="#000">00</text><text x="805.3" y="480.7" font-size="12.8" fill="#000">00</text></g><text x="219" y="694.6" font-size="12.8" text-anchor="middle" fill="#000">1.000</text><text x="366.6" y="694.6" font-size="12.8" text-anchor="middle" fill="#000">2.000</text><text x="514.25" y="694.6" font-size="12.8" text-anchor="middle" fill="#000">3.000</text><text x="661.8" y="694.6" font-size="12.8" text-anchor="middle" fill="#000">4.000</text><text x="809.65" y="694.6" font-size="12.8" text-anchor="middle" fill="#000">5.000</text><text x="440" y="35" font-size="16" text-anchor="middle" fill="#000">Input File:&#160; sled_2016-05-10T12-44-25ZEDT.strokes.csv --- HR / Pace / Rate / Power</text><text x="439.6" y="712.7" font-size="12.9" text-anchor="middle" fill="#000">Dist (km)</text><text transform="translate(33.8,146) rotate(-90)" font-size="12.8" text-anchor="middle" fill="#000">BPM</text><text transform="translate(33.8,359.75) rotate(-90)" font-size="12.8" text-anchor="middle" fill="#000">SPM</text><text transform="translate(33.8,573.25) rotate(-90)" font-size="12.8" text-anchor="middle" fill="#000">Watts</text><text transform="translate(855,145.6) rotate(-90)" font-size="12.8" text-anchor="middle" fill="#000">(sec/500)</text></svg></body></html>
